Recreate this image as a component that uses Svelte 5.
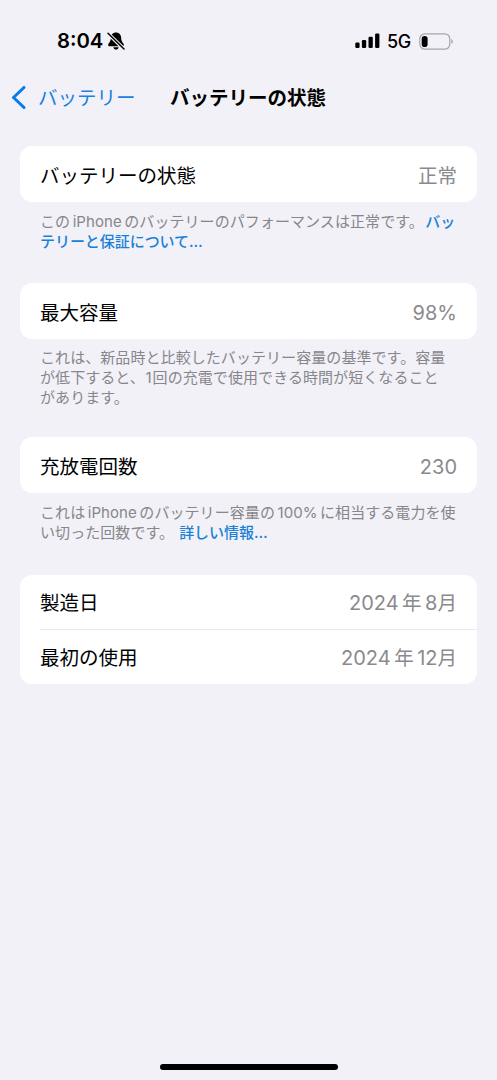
<script lang="ts">
  const groups = [
    {
      rows: [{ label: 'バッテリーの状態', value: [{ text: '正常', kind: 'kanji' }] }],
      note: [
        [
          { text: 'この' },
          { text: 'iPhone', kind: 'latin' },
          { text: 'のバッテリーのパフォーマンスは正常です。' },
          { text: 'バッ', kind: 'link spaced' }
        ],
        [{ text: 'テリーと保証について…', kind: 'link' }]
      ]
    },
    {
      rows: [{ label: '最大容量', value: [{ text: '98%' }] }],
      note: [
        [{ text: 'これは、新品時と比較したバッテリー容量の基準です。容量' }],
        [{ text: 'が低下すると、' }, { text: '1', kind: 'digit' }, { text: '回の充電で使用できる時間が短くなること' }],
        [{ text: 'があります。' }]
      ]
    },
    {
      rows: [{ label: '充放電回数', value: [{ text: '230' }] }],
      note: [
        [
          { text: 'これは' },
          { text: 'iPhone', kind: 'latin' },
          { text: 'のバッテリー容量の' },
          { text: '100%', kind: 'latin' },
          { text: 'に相当する電力を使' }
        ],
        [{ text: 'い切った回数です。' }, { text: '詳しい情報…', kind: 'link more' }]
      ]
    },
    {
      rows: [
        { label: '製造日', value: [{ text: '2024' }, { text: '年', kind: 'kanji unit' }, { text: '8' }, { text: '月', kind: 'kanji last' }] },
        { label: '最初の使用', value: [{ text: '2024' }, { text: '年', kind: 'kanji unit' }, { text: '12' }, { text: '月', kind: 'kanji last' }] }
      ],
      note: []
    }
  ];
</script>

<div class="screen">
  <header class="status">
    <div class="clock">
      <span class="time">8:04</span>
      <svg width="18" height="18" viewBox="0 0 18 18">
        <path d="M9 0.5C6 0.5 4 2.7 3.9 5.5C3.8 8.7 3 10 1.7 11.4C0.7 12.5 0.9 14.2 2.5 14.2H15.5C17.1 14.2 17.3 12.5 16.3 11.4C15 10 14.2 8.7 14.1 5.5C14 2.7 12 0.5 9 0.5Z" />
        <path d="M6.4 15.2H11.6C11.3 16.8 10.4 17.6 9 17.6S6.7 16.8 6.4 15.2Z" />
        <path d="M0.8 1.3L17 17.1" stroke="#f2f1f7" stroke-width="3.6" />
        <path d="M1 1.2L17 17" stroke="#000" stroke-width="1.5" stroke-linecap="round" />
      </svg>
    </div>
    <div class="signal">
      <svg width="25" height="16" viewBox="0 0 25 16">
        <rect x="0.3" y="9.6" width="4.3" height="5.4" rx="1.2" />
        <rect x="6.9" y="7" width="4.3" height="8" rx="1.2" />
        <rect x="13.5" y="3.8" width="4.3" height="11.2" rx="1.2" />
        <rect x="20.1" y="0.5" width="4.3" height="14.5" rx="1.2" />
      </svg>
      <span class="network">5G</span>
      <svg width="35" height="17" viewBox="0 0 35 17">
        <rect x="0.8" y="0.8" width="30" height="15.4" rx="5" fill="none" stroke="#a5a5aa" stroke-width="1.2" />
        <rect x="2.7" y="2.9" width="5.9" height="11.2" rx="2.8" />
        <path d="M32.3 6.1C34.3 6.8 34.3 10.2 32.3 10.9Z" fill="#a5a5aa" />
      </svg>
    </div>
  </header>

  <nav>
    <a class="back" href="#back">
      <svg width="16" height="26" viewBox="0 0 16 26">
        <path d="M13 2.5L2.5 12.5L13 22.5" fill="none" stroke="#087bea" stroke-width="3.1" stroke-linecap="round" stroke-linejoin="round" />
      </svg>
      バッテリー
    </a>
    <h1>バッテリーの状態</h1>
  </nav>

  <main>
    {#each groups as group}
      <section class:long={group.note.length > 2}>
        <div class="card" class:multi={group.rows.length > 1}>
          {#each group.rows as row}
            <div class="row">
              <span>{row.label}</span>
              <span class="value">{#each row.value as part}<span class={part.kind}>{part.text}</span>{/each}</span>
            </div>
          {/each}
        </div>
        {#if group.note.length}
          <div class="note">
            {#each group.note as line}
              <div class="line">{#each line as part}<span class={part.kind}>{part.text}</span>{/each}</div>
            {/each}
          </div>
        {/if}
      </section>
    {/each}
  </main>

  <footer><div class="home"></div></footer>
</div>

<style>
  :global(body) {
    margin: 0;
    background: #f2f1f7;
  }

  .screen {
    display: flex;
    flex-direction: column;
    height: 1080px;
    overflow: hidden;
    background: #f2f1f7;
    color: #000;
    font-family: Inter, "Noto Sans CJK JP", sans-serif;
    font-size: 19.5px;
    line-height: 24px;
    white-space: nowrap;
  }

  .status {
    display: flex;
    justify-content: space-between;
    align-items: center;
    height: 82px;
    padding: 0 43px 0 57px;
    box-sizing: border-box;
    flex: none;
  }

  .clock,
  .signal {
    display: flex;
    align-items: center;
  }

  .clock {
    gap: 4px;
  }

  .time {
    font-size: 20.3px;
    font-weight: 600;
  }

  .network {
    margin: 0 8px 0 7px;
    padding-top: 1px;
    font-size: 18px;
    font-weight: 500;
    letter-spacing: -0.3px;
  }

  nav {
    display: flex;
    align-items: center;
    height: 32px;
    padding-left: 11px;
    flex: none;
  }

  .back {
    display: flex;
    align-items: center;
    gap: 11px;
    width: 159px;
    color: #1a80e5;
    text-decoration: none;
  }

  h1 {
    margin: 0;
    font-size: 19.5px;
    font-weight: 700;
  }

  main {
    flex: 1;
    padding: 32px 20px 0;
  }

  section {
    margin-bottom: 32px;
  }

  section.long {
    margin-bottom: 30px;
  }

  .card {
    border-radius: 12px;
    background: #fff;
  }

  .row {
    display: flex;
    justify-content: space-between;
    align-items: center;
    box-sizing: border-box;
    height: 56px;
    margin-left: 20px;
    padding: 4px 20px 0 0;
  }

  .multi {
    margin-top: 33px;
  }

  .multi .row {
    height: 54px;
    padding-top: 1px;
  }

  .multi .row + .row {
    height: 55px;
    padding-top: 2px;
    border-top: 1px solid #e9e9ec;
  }

  .value {
    color: #8a8a8e;
    font-size: 20px;
  }

  .kanji {
    font-size: 19.5px;
  }

  .unit {
    margin: 0 3.5px;
  }

  .note {
    padding: 10px 0 0 20px;
    color: #86868b;
    font-size: 15px;
    line-height: 20px;
    letter-spacing: 0.07px;
  }

  .long .note {
    padding-top: 9px;
  }

  .line {
    height: 20px;
  }

  .line:last-child {
    height: 19px;
  }

  .latin {
    margin: 0 2.5px;
  }

  .digit {
    margin: 0 1px 0 0.5px;
  }

  .link {
    color: #1a80d8;
    font-weight: 500;
    letter-spacing: -0.05px;
  }

  .spaced {
    margin-left: 1.5px;
  }

  .more {
    margin-left: 5px;
  }

  footer {
    display: flex;
    justify-content: center;
    padding-bottom: 10px;
  }

  .home {
    width: 178px;
    height: 6px;
    border-radius: 3px;
    background: #000;
  }
</style>
